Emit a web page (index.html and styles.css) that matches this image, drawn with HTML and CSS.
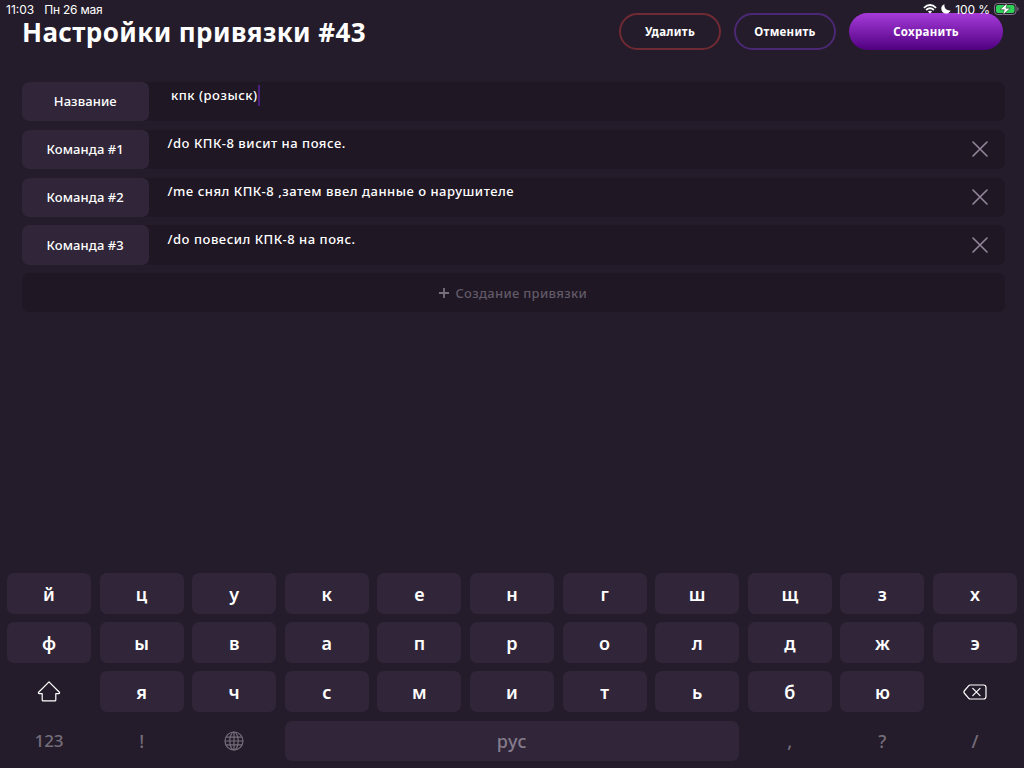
FILE: index.html
```
<!DOCTYPE html>
<html lang="ru">
<head>
<meta charset="utf-8">
<title>Настройки привязки</title>
<link rel="stylesheet" href="styles.css">
</head>
<body>
<div class="screen">
  <div class="status">
    <span class="time">11:03</span><span class="date">Пн 26 мая</span>
    <div class="indicators">
      <svg class="wifi" width="14" height="10" viewBox="0 0 14 10" fill="none" stroke="#fff" stroke-width="1.8"><path d="M.9 3.8Q7-1.7 13.1 3.8M3.1 6Q7 2.6 10.9 6"/><path d="M7 9.6L4.9 7.5Q7 5.9 9.1 7.5Z" fill="#fff" stroke="none"/></svg>
      <svg class="moon" width="10" height="10" viewBox="0 0 10 10"><path d="M3.4.3C1.3 1 .2 2.8.3 4.9C.4 7.6 2.4 9.6 5 9.6C7 9.6 8.8 8.4 9.6 6.4C6.4 7 3 5 3.4.3Z" fill="#fff"/></svg>
      <span class="percent">100 %</span>
      <svg class="battery" width="26" height="12" viewBox="0 0 26 12"><rect x=".5" y=".5" width="21.5" height="11" rx="3.2" fill="none" stroke="#81778a"/><rect x="2" y="2" width="18.5" height="8" rx="2" fill="#30d158"/><path d="M23.4 4Q24.7 4.7 24.7 6T23.4 8Z" fill="#81778a"/><path d="M13.2 0L6 6.7H10.3L8.9 12L16.2 5.2H12Z" fill="#fff" stroke="#241c2a" stroke-width=".5"/></svg>
    </div>
  </div>
  <header class="header">
    <h1 class="title">Настройки привязки #43</h1>
    <div class="actions">
      <button class="btn btn-delete">Удалить</button>
      <button class="btn btn-cancel">Отменить</button>
      <button class="btn btn-save">Сохранить</button>
    </div>
  </header>
  <main class="form">
    <div class="row"><div class="label label-name">Название</div><div class="value value-name">кпк (розыск)<i class="caret"></i></div></div>
    <div class="row"><div class="label">Команда #1</div><div class="value">/do КПК-8 висит на поясе.</div><svg class="remove" viewBox="0 0 16 16"><path d="M1 1L15 15M15 1L1 15"/></svg></div>
    <div class="row"><div class="label">Команда #2</div><div class="value">/me снял КПК-8 ,затем ввел данные о нарушителе</div><svg class="remove" viewBox="0 0 16 16"><path d="M1 1L15 15M15 1L1 15"/></svg></div>
    <div class="row"><div class="label">Команда #3</div><div class="value value-last">/do повесил КПК-8 на пояс.</div><svg class="remove" viewBox="0 0 16 16"><path d="M1 1L15 15M15 1L1 15"/></svg></div>
    <div class="row create"><svg class="plus" viewBox="0 0 10 10"><path d="M5 0V10M0 5H10"/></svg><span>Создание привязки</span></div>
  </main>
  <div class="keyboard">
    <div class="key">й</div><div class="key">ц</div><div class="key">у</div><div class="key">к</div><div class="key">е</div><div class="key">н</div><div class="key">г</div><div class="key">ш</div><div class="key">щ</div><div class="key">з</div><div class="key">х</div>
    <div class="key">ф</div><div class="key">ы</div><div class="key">в</div><div class="key">а</div><div class="key">п</div><div class="key">р</div><div class="key">о</div><div class="key">л</div><div class="key">д</div><div class="key">ж</div><div class="key">э</div>
    <div class="key bare"><svg class="shift" width="24" height="22" viewBox="0 0 24 22"><path d="M12 .8L22.6 11.5Q22.7 12.5 21.8 12.7H18.8V18.9Q18.8 19.8 17.9 19.8H6.1Q5.2 19.8 5.2 18.9V12.7H2.2Q1.3 12.5 1.4 11.5Z"/></svg></div><div class="key">я</div><div class="key">ч</div><div class="key">с</div><div class="key">м</div><div class="key">и</div><div class="key">т</div><div class="key">ь</div><div class="key">б</div><div class="key">ю</div><div class="key bare"><svg class="erase" width="24" height="16" viewBox="0 0 24 16"><path d="M7.2 1H20.5Q23 1 23 3.5V12.5Q23 15 20.5 15H7.2Q6.4 15 5.8 14.3L1.2 9Q.6 8 1.2 7L5.8 1.7Q6.4 1 7.2 1ZM9.8 4.4L17 11.6M17 4.4L9.8 11.6"/></svg></div>
    <div class="key bare digits">123</div><div class="key bare">!</div><div class="key bare"><svg class="globe" width="20" height="20" viewBox="0 0 20 20"><circle cx="10" cy="10" r="9"/><ellipse cx="10" cy="10" rx="4.2" ry="9"/><path d="M10 1V19M1 10H19M2.2 6.2H17.8M2.2 13.8H17.8"/></svg></div><div class="key space">рус</div><div class="key bare">,</div><div class="key bare">?</div><div class="key bare slash">/</div>
  </div>
</div>
</body>
</html>
```
FILE: styles.css
```
* { box-sizing: border-box; }
body { margin: 0; background: #241c2a; }
.screen {
  width: 1024px; height: 768px; overflow: hidden; position: relative;
  display: flex; flex-direction: column;
  background: #241c2a; color: #fff;
  font-family: "Noto Sans", "Open Sans", sans-serif; font-weight: 500;
}
.status {
  position: absolute; z-index: 2; left: 0; top: 0; width: 1024px; height: 19px;
  padding: 0 6px; display: flex; align-items: center;
  font: 400 12px/14px Inter, sans-serif;
}
.date { margin-left: 10px; letter-spacing: -.2px; }
.indicators { margin-left: auto; display: flex; align-items: center; }
.wifi { margin-top: -1px; }
.moon { margin: -1px 0 0 4px; }
.percent { margin-left: 4px; letter-spacing: -.1px; }
.battery { margin: -1px -2px 0 4px; }
.header {
  height: 82px; padding: 13px 21px 0 22px;
  display: flex; justify-content: space-between; align-items: flex-start;
}
.title { margin: 0; padding-top: 5px; font-size: 26px; line-height: 28px; font-weight: 700; letter-spacing: .4px; white-space: nowrap; }
.actions { display: flex; gap: 13px; }
.btn {
  height: 37px; padding: 0 0 1px; border-radius: 19px; border: 2px solid;
  background: transparent; color: #fff; font: 700 11.5px "Noto Sans", sans-serif; letter-spacing: .3px;
}
.btn-delete { width: 102px; border-color: #702a33; }
.btn-cancel { width: 102px; border-color: #4b2873; }
.btn-save { width: 154px; border: 0; background: linear-gradient(#a63bda, #500080); }
.form { padding: 0 19px 0 21.5px; display: flex; flex-direction: column; gap: 8.5px; }
.row { height: 39.3px; display: flex; border-radius: 7px; background: #1f1724; font-size: 13px; }
.label {
  width: 127.5px; display: flex; align-items: center; justify-content: center;
  background: #312639; border-radius: 7px; letter-spacing: .1px;
}
.label-name { padding-bottom: 1px; }
.value { flex: 1; padding-left: 18.5px; line-height: 26px; letter-spacing: .52px; white-space: nowrap; display: flex; align-items: flex-start; }
.value-last { line-height: 28px; }
.value-name { padding-left: 22px; }
.caret { width: 2px; height: 21px; margin-top: 3px; background: #4c2080; }
.remove { width: 16px; height: 16px; margin: auto 17.5px auto 0; fill: none; stroke: #92869b; stroke-width: 1.6; stroke-linecap: round; }
.create { align-items: center; justify-content: center; gap: 6px; color: #625a67; letter-spacing: .3px; }
.plus { width: 10px; height: 10px; fill: none; stroke: #77707b; stroke-width: 1.8; }
.keyboard {
  margin-top: auto; padding: 0 7px 6.8px;
  display: grid; grid-template-columns: repeat(11, 1fr); grid-auto-rows: 40.7px; gap: 8.4px 8.6px;
}
.key {
  display: flex; align-items: center; justify-content: center;
  background: #312639; border-radius: 7px; font-size: 18px; font-weight: 600; line-height: 24px;
}
.bare { background: none; color: #756d7a; font-weight: 500; }
.digits { font-size: 17px; }
.space { grid-column: span 5; color: #857b8c; font-weight: 500; letter-spacing: .6px; }
.shift, .erase { fill: none; stroke: #fff; stroke-width: 1.2; stroke-linejoin: round; stroke-linecap: round; }
.globe { fill: none; stroke: #756d7a; stroke-width: 1.2; }
```
